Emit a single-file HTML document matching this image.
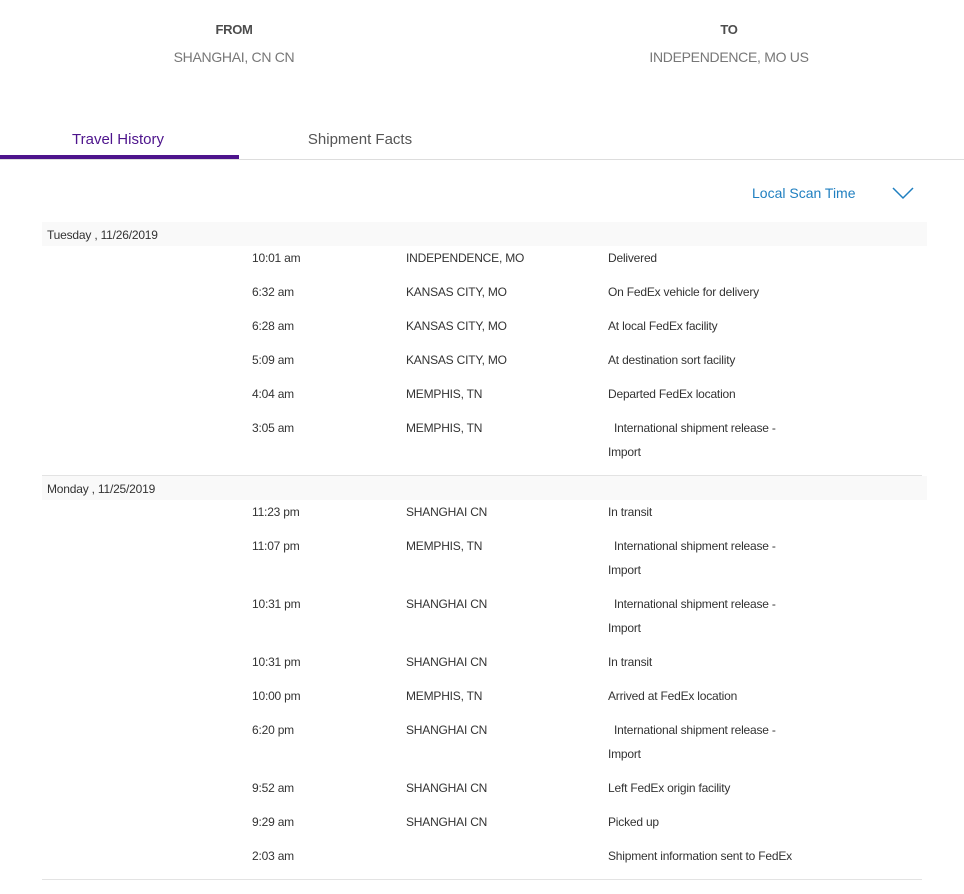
<!DOCTYPE html>
<html><head><meta charset="utf-8"><style>
body{margin:0;width:964px;height:894px;background:#fff;position:relative;overflow:hidden;font-family:"Liberation Sans",Arial,sans-serif;}
.a{position:absolute;white-space:nowrap;line-height:16px;}
.c{transform:translateX(-50%);}
.s{font-size:12px;color:#333;letter-spacing:-0.2px;margin-top:1px;}
.bar{position:absolute;left:42px;width:885px;height:24px;background:#f9f9f9;}
.hr{position:absolute;left:42px;width:880px;height:1px;background:#e3e3e3;}
</style></head><body>
<div class="a c" style="left:234px;top:22px;font-size:13px;font-weight:bold;color:#4d4d4d;letter-spacing:-0.3px">FROM</div>
<div class="a c" style="left:234px;top:49px;font-size:14px;color:#777;letter-spacing:-0.3px">SHANGHAI, CN CN</div>
<div class="a c" style="left:729px;top:22px;font-size:13px;font-weight:bold;color:#4d4d4d;letter-spacing:-0.3px">TO</div>
<div class="a c" style="left:729px;top:49px;font-size:14px;color:#777;letter-spacing:-0.3px">INDEPENDENCE, MO US</div>

<div class="a c" style="left:118px;top:132px;font-size:15px;color:#4d148c">Travel History</div>
<div class="a c" style="left:360px;top:132px;font-size:15px;color:#555">Shipment Facts</div>
<div style="position:absolute;left:0;top:159px;width:964px;height:1px;background:#ddd"></div>
<div style="position:absolute;left:0;top:155px;width:239px;height:4px;background:#4d148c"></div>

<div class="a" style="left:752px;top:185px;font-size:14px;color:#1f7fc0">Local Scan Time</div>
<svg style="position:absolute;left:892px;top:186px" width="23" height="15"><path d="M1 2 L11 12 L21 2" fill="none" stroke="#1f7fc0" stroke-width="1.5"/></svg>

<div class="bar" style="top:222px"></div>
<div class="a s" style="left:47px;top:226px">Tuesday , 11/26/2019</div>

<div class="a s" style="left:252px;top:249px">10:01 am</div><div class="a s" style="left:406px;top:249px">INDEPENDENCE, MO</div><div class="a s" style="left:608px;top:249px">Delivered</div>
<div class="a s" style="left:252px;top:283px">6:32 am</div><div class="a s" style="left:406px;top:283px">KANSAS CITY, MO</div><div class="a s" style="left:608px;top:283px">On FedEx vehicle for delivery</div>
<div class="a s" style="left:252px;top:317px">6:28 am</div><div class="a s" style="left:406px;top:317px">KANSAS CITY, MO</div><div class="a s" style="left:608px;top:317px">At local FedEx facility</div>
<div class="a s" style="left:252px;top:351px">5:09 am</div><div class="a s" style="left:406px;top:351px">KANSAS CITY, MO</div><div class="a s" style="left:608px;top:351px">At destination sort facility</div>
<div class="a s" style="left:252px;top:385px">4:04 am</div><div class="a s" style="left:406px;top:385px">MEMPHIS, TN</div><div class="a s" style="left:608px;top:385px">Departed FedEx location</div>
<div class="a s" style="left:252px;top:419px">3:05 am</div><div class="a s" style="left:406px;top:419px">MEMPHIS, TN</div><div class="a s" style="left:614px;top:419px">International shipment release -</div><div class="a s" style="left:608px;top:443px">Import</div>

<div class="hr" style="top:475px"></div>
<div class="bar" style="top:476px"></div>
<div class="a s" style="left:47px;top:480px">Monday , 11/25/2019</div>

<div class="a s" style="left:252px;top:503px">11:23 pm</div><div class="a s" style="left:406px;top:503px">SHANGHAI CN</div><div class="a s" style="left:608px;top:503px">In transit</div>
<div class="a s" style="left:252px;top:537px">11:07 pm</div><div class="a s" style="left:406px;top:537px">MEMPHIS, TN</div><div class="a s" style="left:614px;top:537px">International shipment release -</div><div class="a s" style="left:608px;top:561px">Import</div>
<div class="a s" style="left:252px;top:595px">10:31 pm</div><div class="a s" style="left:406px;top:595px">SHANGHAI CN</div><div class="a s" style="left:614px;top:595px">International shipment release -</div><div class="a s" style="left:608px;top:619px">Import</div>
<div class="a s" style="left:252px;top:653px">10:31 pm</div><div class="a s" style="left:406px;top:653px">SHANGHAI CN</div><div class="a s" style="left:608px;top:653px">In transit</div>
<div class="a s" style="left:252px;top:687px">10:00 pm</div><div class="a s" style="left:406px;top:687px">MEMPHIS, TN</div><div class="a s" style="left:608px;top:687px">Arrived at FedEx location</div>
<div class="a s" style="left:252px;top:721px">6:20 pm</div><div class="a s" style="left:406px;top:721px">SHANGHAI CN</div><div class="a s" style="left:614px;top:721px">International shipment release -</div><div class="a s" style="left:608px;top:745px">Import</div>
<div class="a s" style="left:252px;top:779px">9:52 am</div><div class="a s" style="left:406px;top:779px">SHANGHAI CN</div><div class="a s" style="left:608px;top:779px">Left FedEx origin facility</div>
<div class="a s" style="left:252px;top:813px">9:29 am</div><div class="a s" style="left:406px;top:813px">SHANGHAI CN</div><div class="a s" style="left:608px;top:813px">Picked up</div>
<div class="a s" style="left:252px;top:847px">2:03 am</div><div class="a s" style="left:608px;top:847px">Shipment information sent to FedEx</div>

<div class="hr" style="top:879px"></div>
</body></html>
